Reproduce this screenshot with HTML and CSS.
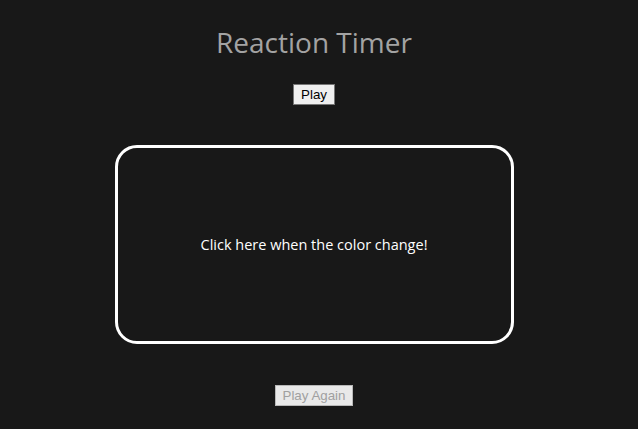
FILE: index.html
```html
<!DOCTYPE html>
<html>
<head>
<meta charset="utf-8">
<link rel="stylesheet" href="styles.css">
</head>
<body>
<div class="page">
  <h1 class="title">Reaction Timer</h1>
  <button class="btn btn-play">Play</button>
  <div class="box">
    <p class="box-text">Click here when the color change!</p>
  </div>
  <button class="btn btn-again" disabled>Play Again</button>
</div>
</body>
</html>
```
FILE: styles.css
```css
html, body {
  margin: 0;
  padding: 0;
  background: #181818;
  height: 100%;
  overflow: hidden;
}
.page {
  width: 628px;
  display: flex;
  flex-direction: column;
  align-items: center;
  font-family: "Open Sans", "Noto Sans", sans-serif;
}
.title {
  margin: 24px 0 0;
  font-size: 28px;
  font-weight: 400;
  line-height: 36px;
  color: #a3a3a3;
}
.btn {
  font-family: "Liberation Sans", Arial, sans-serif;
  font-size: 13.33px;
  line-height: 15px;
  padding: 2px 7px;
  border: 1px solid #767676;
  border-radius: 0;
  background: #efefef;
  color: #000;
}
.btn-play {
  margin-top: 24px;
}
.box {
  margin-top: 40px;
  width: 393px;
  height: 193px;
  border: 3px solid #ffffff;
  border-radius: 22px;
  display: flex;
  align-items: center;
  justify-content: center;
}
.box-text {
  margin: 0;
  color: #ffffff;
  font-size: 14.5px;
}
.btn-again {
  margin-top: 41px;
  padding: 2px 7px;
  color: #a0a0a0;
  background: #e9e9e9;
  border-color: #b8b8b8;
}
```
